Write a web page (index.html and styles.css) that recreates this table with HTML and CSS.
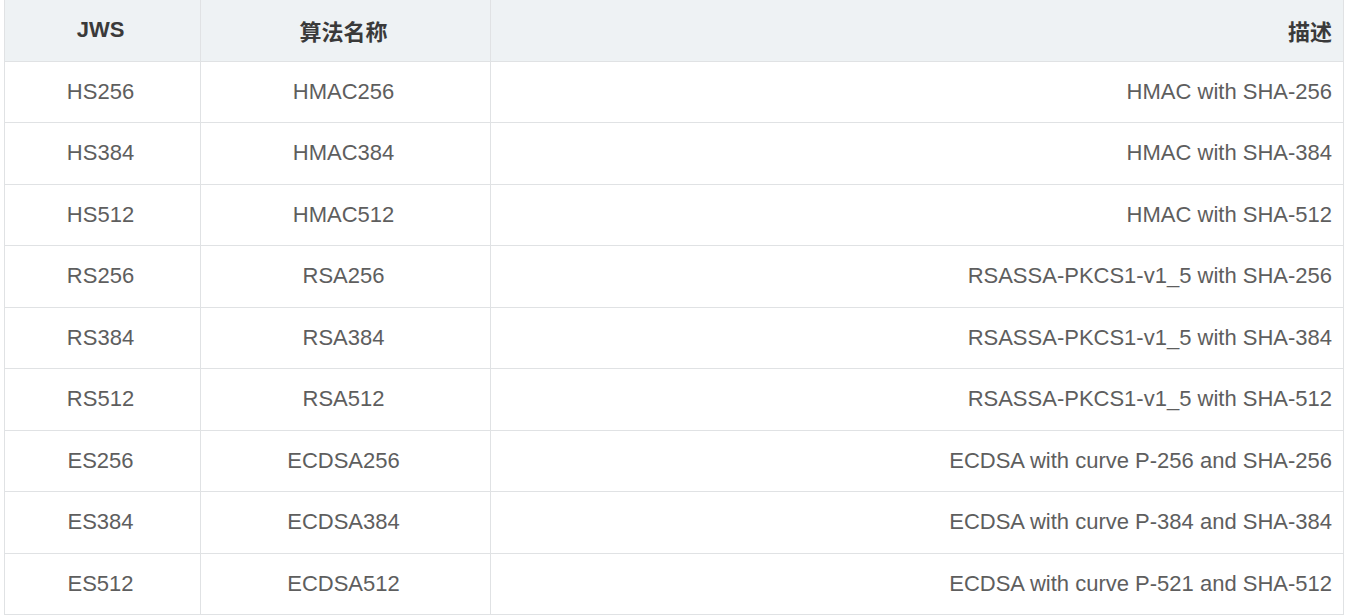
FILE: index.html
```html
<!DOCTYPE html>
<html lang="zh">
<head>
<meta charset="utf-8">
<link rel="stylesheet" href="styles.css">
</head>
<body>
<table class="algo">
  <colgroup>
    <col class="c1"><col class="c2"><col class="c3">
  </colgroup>
  <thead>
    <tr><th class="center">JWS</th><th class="center">算法名称</th><th class="right">描述</th></tr>
  </thead>
  <tbody>
    <tr><td class="center">HS256</td><td class="center">HMAC256</td><td class="right">HMAC with SHA-256</td></tr>
    <tr><td class="center">HS384</td><td class="center">HMAC384</td><td class="right">HMAC with SHA-384</td></tr>
    <tr><td class="center">HS512</td><td class="center">HMAC512</td><td class="right">HMAC with SHA-512</td></tr>
    <tr><td class="center">RS256</td><td class="center">RSA256</td><td class="right">RSASSA-PKCS1-v1_5 with SHA-256</td></tr>
    <tr><td class="center">RS384</td><td class="center">RSA384</td><td class="right">RSASSA-PKCS1-v1_5 with SHA-384</td></tr>
    <tr><td class="center">RS512</td><td class="center">RSA512</td><td class="right">RSASSA-PKCS1-v1_5 with SHA-512</td></tr>
    <tr><td class="center">ES256</td><td class="center">ECDSA256</td><td class="right">ECDSA with curve P-256 and SHA-256</td></tr>
    <tr><td class="center">ES384</td><td class="center">ECDSA384</td><td class="right">ECDSA with curve P-384 and SHA-384</td></tr>
    <tr><td class="center">ES512</td><td class="center">ECDSA512</td><td class="right">ECDSA with curve P-521 and SHA-512</td></tr>
  </tbody>
</table>
</body>
</html>
```
FILE: styles.css
```css
html, body {
  margin: 0;
  padding: 0;
  background: #ffffff;
}
body {
  padding-left: 4px;
  font-family: "Liberation Sans", Arial, "Noto Sans CJK SC", sans-serif;
}
.algo {
  border-collapse: collapse;
  width: 1339px;
  table-layout: fixed;
  font-size: 22px;
  color: #5e5e5e;
}
.c1 { width: 196px; }
.c2 { width: 290px; }
.c3 { width: 853px; }
.algo th, .algo td {
  border: 1px solid #e0e2e4;
  white-space: nowrap;
}
.algo thead tr {
  height: 61px;
}
.algo th {
  background: #eef2f4;
  color: #3a3a3a;
  font-weight: bold;
  border-top: none;
}
.algo tbody tr {
  height: 61.5px;
}
.algo td {
  background: #fff;
}
.center {
  text-align: center;
  padding: 0 12px 0 8px;
}
.right {
  text-align: right;
  padding: 0 11px 0 10px;
}
```
